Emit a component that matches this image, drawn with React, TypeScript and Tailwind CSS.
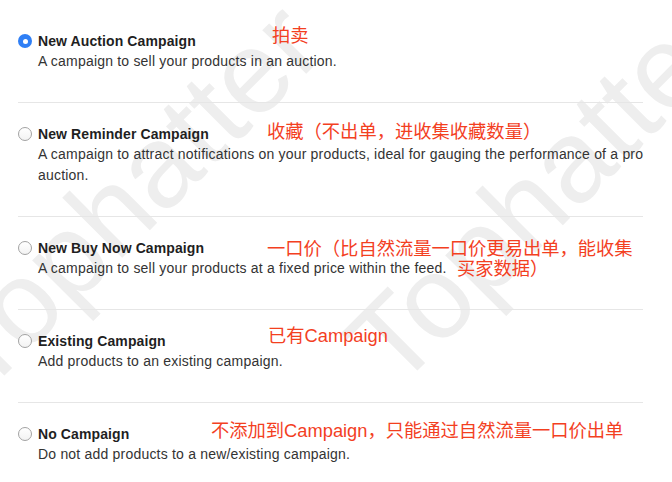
import { ReactNode } from 'react'

interface Opcion {
  id: string
  titulo: string
  lineas: string[]
}

const opciones: Opcion[] = [
  { id: 'auction', titulo: 'New Auction Campaign', lineas: ['A campaign to sell your products in an auction.'] },
  {
    id: 'reminder',
    titulo: 'New Reminder Campaign',
    lineas: ['A campaign to attract notifications on your products, ideal for gauging the performance of a pro', 'auction.'],
  },
  { id: 'buynow', titulo: 'New Buy Now Campaign', lineas: ['A campaign to sell your products at a fixed price within the feed.'] },
  { id: 'existing', titulo: 'Existing Campaign', lineas: ['Add products to an existing campaign.'] },
  { id: 'none', titulo: 'No Campaign', lineas: ['Do not add products to a new/existing campaign.'] },
]

function Radio({ checked }: { checked: boolean }) {
  return checked ? (
    <span className="flex h-[14px] w-[14px] items-center justify-center rounded-full bg-[#2f7ff5]">
      <span className="h-[5px] w-[5px] rounded-full bg-white" />
    </span>
  ) : (
    <span className="h-[14px] w-[14px] rounded-full border border-[#a3a3a3] bg-gradient-to-b from-white to-[#f3f3f3]" />
  )
}

function Nota({ className, children }: { className: string; children: ReactNode }) {
  return (
    <span className={`absolute whitespace-nowrap text-[18.3px] leading-[21px] text-[#f3401f] ${className}`}>
      {children}
    </span>
  )
}

export default function App() {
  const seleccion = 'auction'

  return (
    <div
      className="relative h-[482px] w-[672px] overflow-hidden bg-white"
      style={{ fontFamily: '"Liberation Sans", "Noto Sans CJK SC", Arial, sans-serif' }}
    >
      {/* marca de agua */}
      <div className="pointer-events-none absolute inset-0 select-none text-[117px] leading-none text-[#eeeeee]">
        <span className="absolute left-[-17px] top-[298px] origin-[0_99px] -rotate-45 whitespace-nowrap">Tophatter</span>
        <span className="absolute left-[396px] top-[293px] origin-[0_99px] -rotate-45 whitespace-nowrap">Tophatter</span>
      </div>

      <div className="relative ml-[18px] w-[625px] pt-[10px]">
        <div className="divide-y divide-[#e6e6e6]">
          {opciones.map((o) => (
            <label key={o.id} className="flex gap-[6px] pb-[30px] pt-[21px]">
              <span className="flex h-[20px] items-center">
                <Radio checked={o.id === seleccion} />
              </span>
              <span className="flex flex-col">
                <span className="text-[14px] font-bold leading-[20px] tracking-[0.1px] text-[#1f1f1f]">{o.titulo}</span>
                {o.lineas.map((l, i) => (
                  <span key={i} className="whitespace-nowrap text-[14px] leading-[21px] tracking-[0.2px] text-[#333333]">
                    {l}
                  </span>
                ))}
              </span>
            </label>
          ))}
        </div>
      </div>

      {/* anotaciones */}
      <Nota className="left-[272px] top-[25px]">拍卖</Nota>
      <Nota className="left-[267px] top-[121px]">收藏（不出单，进收集收藏数量）</Nota>
      <Nota className="left-[267px] top-[238px]">一口价（比自然流量一口价更易出单，能收集</Nota>
      <Nota className="left-[457px] top-[258px]">买家数据）</Nota>
      <Nota className="left-[268px] top-[325px]">已有Campaign</Nota>
      <Nota className="left-[211px] top-[420px]">不添加到Campaign，只能通过自然流量一口价出单</Nota>
    </div>
  )
}
